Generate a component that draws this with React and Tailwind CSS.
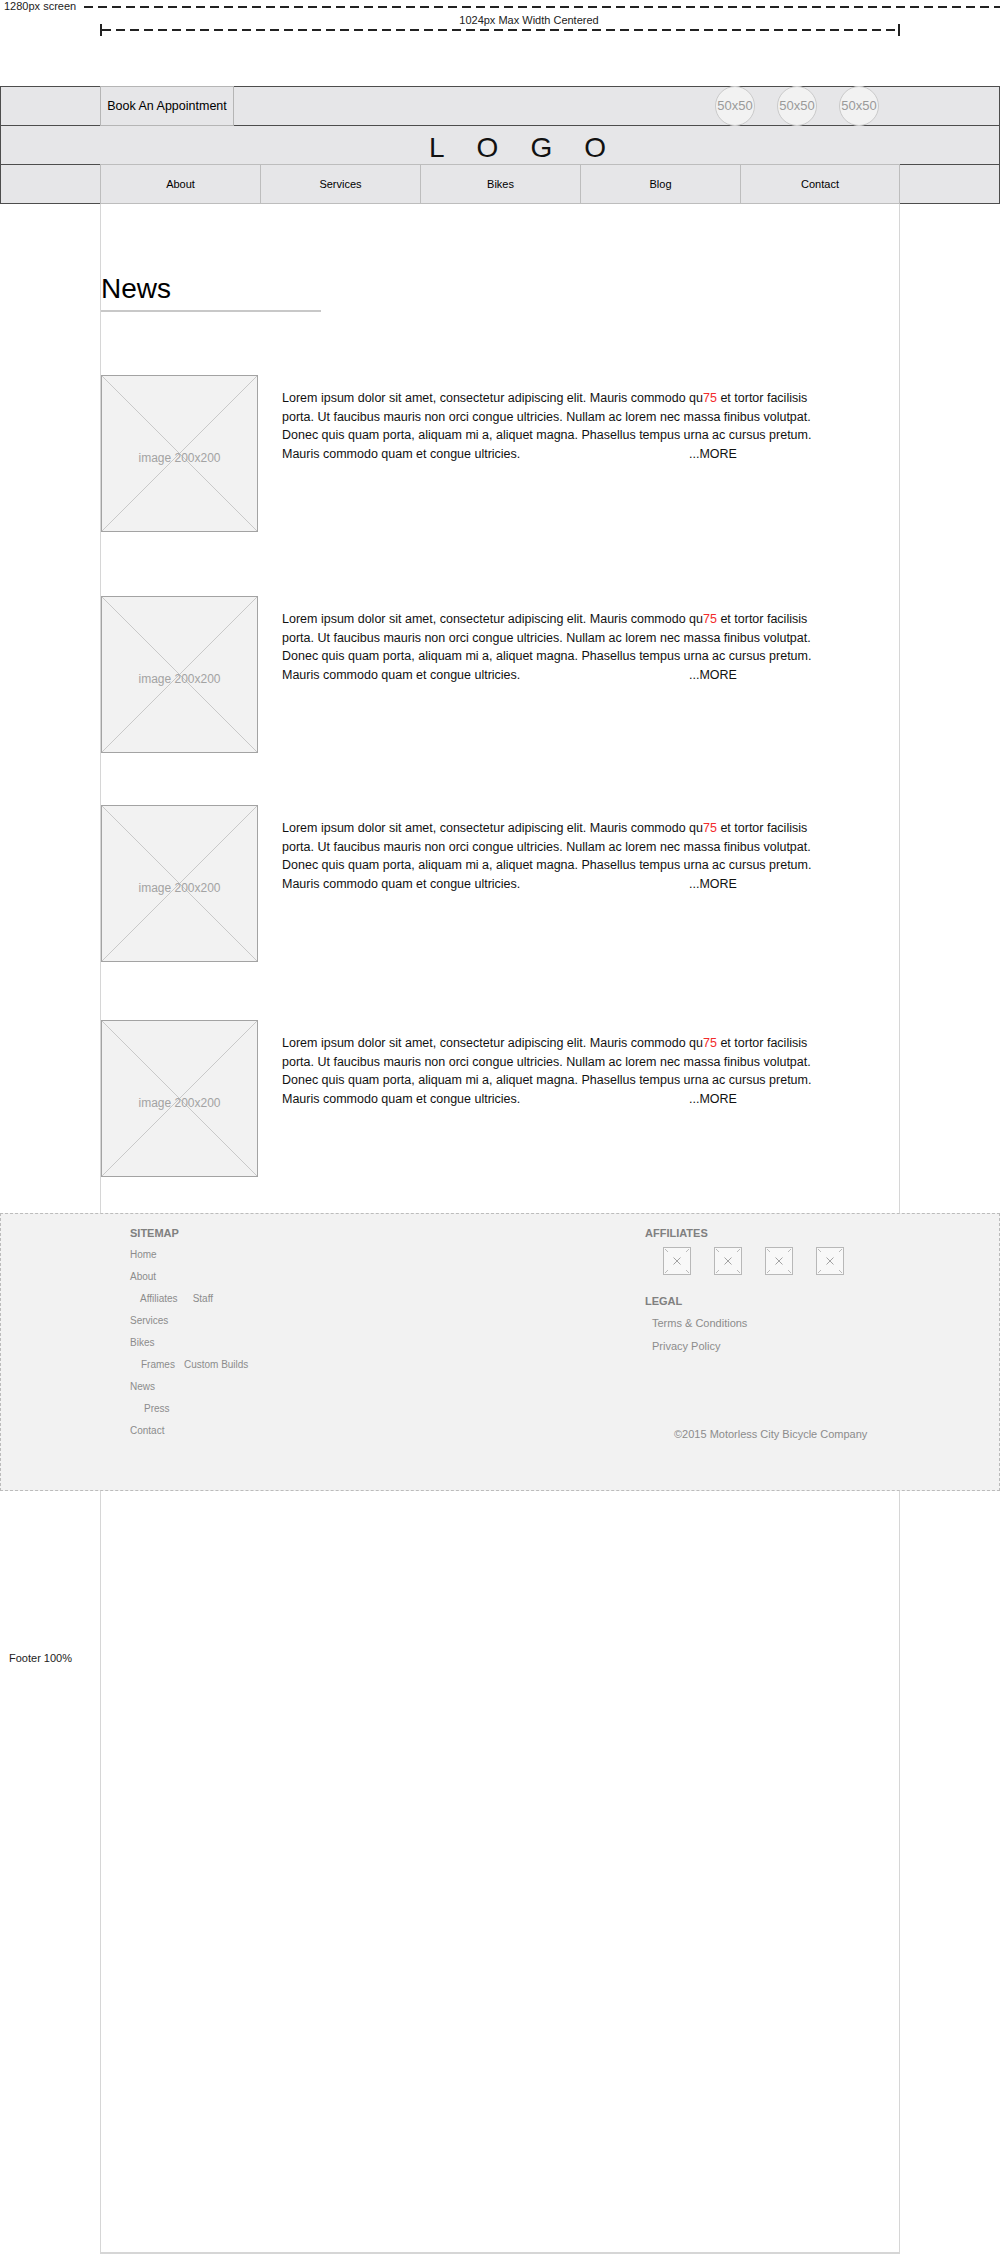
import React from 'react';

const lines = [
  'porta. Ut faucibus mauris non orci congue ultricies. Nullam ac lorem nec massa finibus volutpat.',
  'Donec quis quam porta, aliquam mi a, aliquet magna. Phasellus tempus urna ac cursus pretum.',
];

function ImageBox() {
  return (
    <div className="relative flex h-[157px] w-[157px] shrink-0 items-center justify-center border border-[#a3a3a3] bg-[#f2f2f2]">
      <svg className="absolute inset-0 h-full w-full" viewBox="0 0 155 155" preserveAspectRatio="none">
        <line x1="0" y1="0" x2="155" y2="155" stroke="#c9c9c9" strokeWidth="1" />
        <line x1="155" y1="0" x2="0" y2="155" stroke="#c9c9c9" strokeWidth="1" />
      </svg>
      <span className="relative mt-[8px] text-[12px] text-[#a3a3a3]">image 200x200</span>
    </div>
  );
}

function Article({ spacing }) {
  return (
    <div className={`flex ${spacing}`}>
      <ImageBox />
      <div className="ml-[24px] mt-[14px] whitespace-nowrap text-[12.5px] leading-[18.7px] text-[#111]">
        <div>
          Lorem ipsum dolor sit amet, consectetur adipiscing elit. Mauris commodo qu
          <span className="text-[#f22b2b]">75</span> et tortor facilisis
        </div>
        {lines.map((l) => (
          <div key={l}>{l}</div>
        ))}
        <div className="flex">
          <span className="w-[407px]">Mauris commodo quam et congue ultricies.</span>
          <span>...MORE</span>
        </div>
      </div>
    </div>
  );
}

function AffiliateBox() {
  return (
    <svg width="28" height="28" viewBox="0 0 28 28">
      <rect x="0.5" y="0.5" width="27" height="27" fill="#f8f8f8" stroke="#b8b8b8" />
      <path d="M10.5 10.5 L17.5 17.5 M17.5 10.5 L10.5 17.5" stroke="#999" strokeWidth="0.9" fill="none" />
      <path d="M2 2 L5 5 M26 2 L23 5 M2 26 L5 23 M26 26 L23 23" stroke="#ababab" strokeWidth="0.8" fill="none" />
    </svg>
  );
}

export default function App() {
  const nav = ['About', 'Services', 'Bikes', 'Blog', 'Contact'];

  return (
    <div className="w-[1000px] bg-white font-['Liberation_Sans',Arial,sans-serif] text-black">
      {/* annotations */}
      <div className="h-[86px]">
        <div className="flex h-[13px] items-center">
          <span className="pl-[4px] text-[11px] leading-[13px] text-[#222]">1280px screen</span>
          <svg className="ml-[8px] flex-1" height="4">
            <line x1="0" y1="2" x2="1000" y2="2" stroke="#222" strokeWidth="2" strokeDasharray="9 5" />
          </svg>
        </div>
        <div className="mx-auto mt-[1px] w-[800px] pl-[58px] text-center text-[11px] leading-[13px] text-[#222]">
          1024px Max Width Centered
        </div>
        <svg className="mx-auto mt-[-3px] block" width="800" height="12">
          <line x1="2" y1="6" x2="798" y2="6" stroke="#222" strokeWidth="2" strokeDasharray="9 5" />
          <line x1="1" y1="0" x2="1" y2="12" stroke="#222" strokeWidth="2" />
          <line x1="799" y1="0" x2="799" y2="12" stroke="#222" strokeWidth="2" />
        </svg>
      </div>

      {/* top bar */}
      <div className="h-[40px] border border-[#4d4d4d] bg-[#e6e6e8]">
        <div className="mx-auto flex h-full w-[800px] items-center">
          <div className="flex h-[40px] w-[134px] items-center justify-center border border-[#b5b5b5] bg-[#e6e6e8] text-[12.5px]">
            Book An Appointment
          </div>
          <div className="ml-auto flex gap-[22px] pr-[21px]">
            {[0, 1, 2].map((i) => (
              <div
                key={i}
                className="flex h-[40px] w-[40px] items-center justify-center rounded-full border border-[#cacaca] bg-[#f2f2f2] text-[13px] text-[#9a9a9a]"
              >
                50x50
              </div>
            ))}
          </div>
        </div>
      </div>

      {/* logo */}
      <div className="flex h-[38px] items-center justify-center border-x border-[#4d4d4d] bg-[#e6e6e8] pl-[67px] pt-[6px]">
        <span className="text-[28px] leading-[28px] tracking-[32px] text-[#111]">LOGO</span>
      </div>

      {/* nav */}
      <div className="h-[40px] border border-[#4d4d4d] bg-[#e6e6e8]">
        <div className="mx-auto flex h-full w-[800px] items-center">
          {nav.map((n, i) => (
            <div
              key={n}
              className={`flex h-[40px] w-[160px] items-center justify-center border-y border-l border-[#bdbdbd] bg-[#e6e6e8] text-[11px] ${i === 4 ? 'border-r' : ''}`}
            >
              {n}
            </div>
          ))}
        </div>
      </div>

      {/* main */}
      <main className="mx-auto w-[800px] border-x border-[#d6d6d6] pb-[36px] pt-[71px]">
        <h1 className="text-[28px] leading-[28px] text-black">News</h1>
        <div className="mt-[7px] h-[2px] w-[220px] bg-[#c8c8c8]" />
        <Article spacing="mt-[63px]" />
        <Article spacing="mt-[64px]" />
        <Article spacing="mt-[52px]" />
        <Article spacing="mt-[58px]" />
      </main>

      {/* footer */}
      <footer className="h-[278px] border border-dashed border-[#bcbcbc] bg-[#f2f2f2] pl-[129px] pt-[8px]">
        <div className="flex">
          <div className="w-[515px] text-[10px] leading-[22px] text-[#8c8c8c]">
            <div className="text-[11px] font-bold text-[#808080]">SITEMAP</div>
            <div>Home</div>
            <div>About</div>
            <div className="flex pl-[10px]">
              <span>Affiliates</span>
              <span className="ml-[15px]">Staff</span>
            </div>
            <div>Services</div>
            <div>Bikes</div>
            <div className="flex pl-[11px]">
              <span>Frames</span>
              <span className="ml-[9px]">Custom Builds</span>
            </div>
            <div>News</div>
            <div className="pl-[14px]">Press</div>
            <div>Contact</div>
          </div>
          <div className="text-[11px] text-[#8c8c8c]">
            <div className="font-bold leading-[22px] text-[#808080]">AFFILIATES</div>
            <div className="ml-[18px] mt-[3px] flex gap-[23px]">
              <AffiliateBox />
              <AffiliateBox />
              <AffiliateBox />
              <AffiliateBox />
            </div>
            <div className="mt-[15px] font-bold leading-[22px] text-[#808080]">LEGAL</div>
            <div className="pl-[7px] leading-[23px]">
              <div>Terms &amp; Conditions</div>
              <div>Privacy Policy</div>
            </div>
            <div className="mt-[65px] pl-[29px] leading-[22px]">©2015 Motorless City Bicycle Company</div>
          </div>
        </div>
      </footer>

      {/* below footer */}
      <div className="flex h-[763px]">
        <div className="w-[100px] pl-[9px] pt-[161px] text-[11px] leading-[13px] text-[#222]">Footer 100%</div>
        <div className="w-[800px] border-x border-b-2 border-[#d6d6d6]" />
      </div>
    </div>
  );
}
